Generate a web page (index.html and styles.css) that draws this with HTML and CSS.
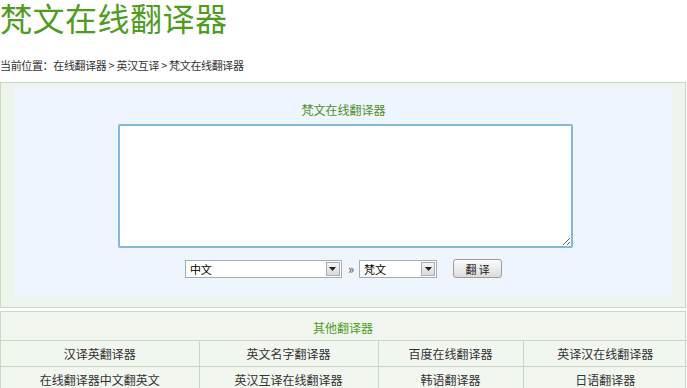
FILE: index.html
```html
<!DOCTYPE html>
<html lang="zh-CN">
<head>
<meta charset="utf-8">
<title>梵文在线翻译器</title>
<link rel="stylesheet" href="styles.css">
</head>
<body>
<h1 class="title">梵文在线翻译器</h1>
<div class="crumb">当前位置：<a href="#">在线翻译器</a> &gt; <a href="#">英汉互译</a> &gt; 梵文在线翻译器</div>
<div class="box">
  <div class="inner">
    <div class="inner-title">梵文在线翻译器</div>
    <textarea class="src"></textarea>
    <div class="controls">
      <div class="sel sel-from"><span class="sel-text">中文</span><span class="arrow"><svg width="7" height="4" viewBox="0 0 7 4"><path d="M0 0h7L3.5 4z" fill="#222"/></svg></span></div>
      <span class="raquo">»</span>
      <div class="sel sel-to"><span class="sel-text">梵文</span><span class="arrow"><svg width="7" height="4" viewBox="0 0 7 4"><path d="M0 0h7L3.5 4z" fill="#222"/></svg></span></div>
      <button class="btn">翻 译</button>
    </div>
  </div>
</div>
<div class="others">
  <div class="others-title">其他翻译器</div>
  <table class="links">
    <colgroup><col class="c1"><col class="c2"><col class="c3"><col class="c4"></colgroup>
    <tr><td>汉译英翻译器</td><td>英文名字翻译器</td><td>百度在线翻译器</td><td>英译汉在线翻译器</td></tr>
    <tr><td>在线翻译器中文翻英文</td><td>英汉互译在线翻译器</td><td>韩语翻译器</td><td>日语翻译器</td></tr>
  </table>
</div>
</body>
</html>
```
FILE: styles.css
```css
* { box-sizing: border-box; }
body {
  margin: 0;
  font-family: "Noto Sans CJK SC", "Liberation Sans", sans-serif;
  background: #fff;
  color: #333;
  width: 687px;
}
.title {
  margin: -6px 0 0;
  font-size: 32px;
  line-height: 46px;
  font-weight: normal;
  color: #4f9c1f;
  letter-spacing: 0.5px;
}
.crumb {
  margin-top: 16px;
  font-size: 11px;
  line-height: 18px;
  color: #333;
  letter-spacing: -0.35px;
}
.crumb a { color: #333; text-decoration: none; }
.box {
  margin-top: 8px;
  width: 686px;
  border: 1px solid #c6dbc4;
  background: #eef5ec;
  padding: 5px 12px 11px 13px;
}
.inner {
  background: #eef5fc;
  height: 208px;
  padding-top: 13px;
  display: flex;
  flex-direction: column;
  align-items: center;
}
.inner-title {
  font-size: 12px;
  line-height: 18px;
  color: #4f8f2a;
  margin-bottom: 5px;
}
.src {
  display: block;
  width: 455px;
  height: 124px;
  border: 2px solid #86b8dc;
  border-radius: 2px;
  background: #fff;
  margin: 0 0 0 3px;
  resize: both;
}
.controls {
  margin-top: 11px;
  display: flex;
  align-items: center;
}
.sel {
  height: 18px;
  border: 1px solid #a5acb2;
  background: #fff;
  display: flex;
  align-items: center;
  justify-content: space-between;
  padding: 0 1px 0 4px;
  font-size: 11px;
  color: #000;
}
.sel-from { width: 157px; }
.sel-to { width: 78px; }
.arrow {
  width: 14px;
  height: 14px;
  border: 1px solid #a9aeb3;
  background: linear-gradient(#f4f4f4, #d9d9d9);
  display: flex;
  align-items: center;
  justify-content: center;
}
.raquo {
  font-size: 13px;
  color: #555;
  margin: 0 5px 0 6px;
  line-height: 18px;
}
.btn {
  margin-left: 16px;
  height: 19px;
  width: 49px;
  padding: 0;
  border: 1px solid #9c9c9c;
  border-radius: 3px;
  background: linear-gradient(#fbfbfb, #dcdcdc);
  font-family: inherit;
  font-size: 11px;
  color: #222;
  line-height: 16px;
}
.others {
  margin-top: 3px;
  width: 686px;
  border: 1px solid #c6dbc4;
  border-bottom: 0;
  background: #f1f6ef;
}
.others-title {
  text-align: center;
  font-size: 12px;
  line-height: 18px;
  padding: 7px 0 3px;
  color: #4f9c1f;
}
.links {
  width: 100%;
  border-collapse: collapse;
  table-layout: fixed;
}
.c1 { width: 198px; }
.c2 { width: 179px; }
.c3 { width: 145px; }
.c4 { width: 164px; }
.links td {
  border: 1px solid #c9d7c9;
  text-align: center;
  font-size: 12px;
  line-height: 23px;
  color: #333;
}
.links tr td:first-child { border-left: 0; }
.links tr td:last-child { border-right: 0; }
```
